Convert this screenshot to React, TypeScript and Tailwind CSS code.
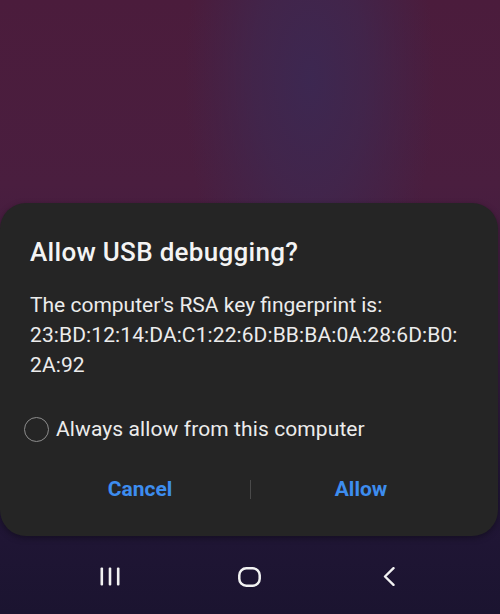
import React from "react";

const font = { fontFamily: "Roboto, 'Noto Sans', sans-serif" };

function NavBar() {
  return (
    <div className="flex h-[78px] items-center">
      <div className="flex w-[220px] justify-center">
        {/* recents */}
        <svg width="20" height="19" viewBox="0 0 20 19">
          <rect x="0.5" y="0.5" width="2.6" height="18" rx="1" fill="#f2f2f2" />
          <rect x="8.7" y="0.5" width="2.6" height="18" rx="1" fill="#f2f2f2" />
          <rect x="16.9" y="0.5" width="2.6" height="18" rx="1" fill="#f2f2f2" />
        </svg>
      </div>
      <div className="flex w-[58px] justify-center">
        <svg width="23" height="20" viewBox="0 0 23 20">
          <rect x="1.3" y="1.3" width="20.4" height="17.4" rx="7" fill="none" stroke="#f2f2f2" strokeWidth="2.5" />
        </svg>
      </div>
      <div className="flex w-[222px] justify-center">
        <svg width="12" height="19" viewBox="0 0 12 19">
          <path d="M10.5 1.2 L2 9.5 L10.5 17.8" fill="none" stroke="#f2f2f2" strokeWidth="2.4" strokeLinecap="round" strokeLinejoin="round" />
        </svg>
      </div>
    </div>
  );
}

export default function App() {
  return (
    <div
      className="relative flex h-[614px] w-[500px] flex-col overflow-hidden bg-[radial-gradient(ellipse_125px_260px_at_310px_80px,rgba(60,40,82,0.95)_0%,rgba(62,40,80,0.7)_45%,rgba(64,40,80,0)_100%),linear-gradient(180deg,#4b1c3c_0%,#4a1e3f_30%,#3c1c42_55%,#221637_80%,#1b1430_100%)]"
      style={font}
    >
      <div className="h-[203px] shrink-0" />
      <div className="flex h-[333px] w-[498px] shrink-0 flex-col rounded-[26px] bg-[#252525] pt-[34px] shadow-[0_2px_6px_rgba(0,0,0,0.35)]">
        <h1 className="px-[30px] text-[26px] leading-[30px] font-medium tracking-[0.3px] text-[#f4f4f4]">
          Allow USB debugging?
        </h1>
        <p className="mt-[23px] px-[30px] text-[21px] leading-[30px] text-[#ececec]">
          The computer's RSA key fingerprint is:
          <br />
          <span className="tracking-[0.1px]">23:BD:12:14:DA:C1:22:6D:BB:BA:0A:28:6D:B0:</span>
          <br />
          <span className="tracking-[0.1px]">2A:92</span>
        </p>
        <label className="mt-[34px] flex items-center pl-[24px]">
          <span className="h-[25px] w-[25px] shrink-0 rounded-full border-[1.5px] border-[#8d8d8d]" />
          <span className="ml-[7px] text-[21px] leading-[30px] tracking-[0.1px] text-[#ececec]">
            Always allow from this computer
          </span>
        </label>
        <div className="mt-[30px] flex items-center pr-[27px] pl-[30px]">
          <button className="flex-1 text-center text-[21px] leading-[30px] font-bold text-[#3d8def]">
            Cancel
          </button>
          <div className="h-[19px] w-px bg-[#4a4a4a]" />
          <button className="flex-1 text-center text-[21px] leading-[30px] font-bold text-[#3d8def]">
            Allow
          </button>
        </div>
      </div>
      <div className="h-[3px] shrink-0" />
      <NavBar />
    </div>
  );
}
